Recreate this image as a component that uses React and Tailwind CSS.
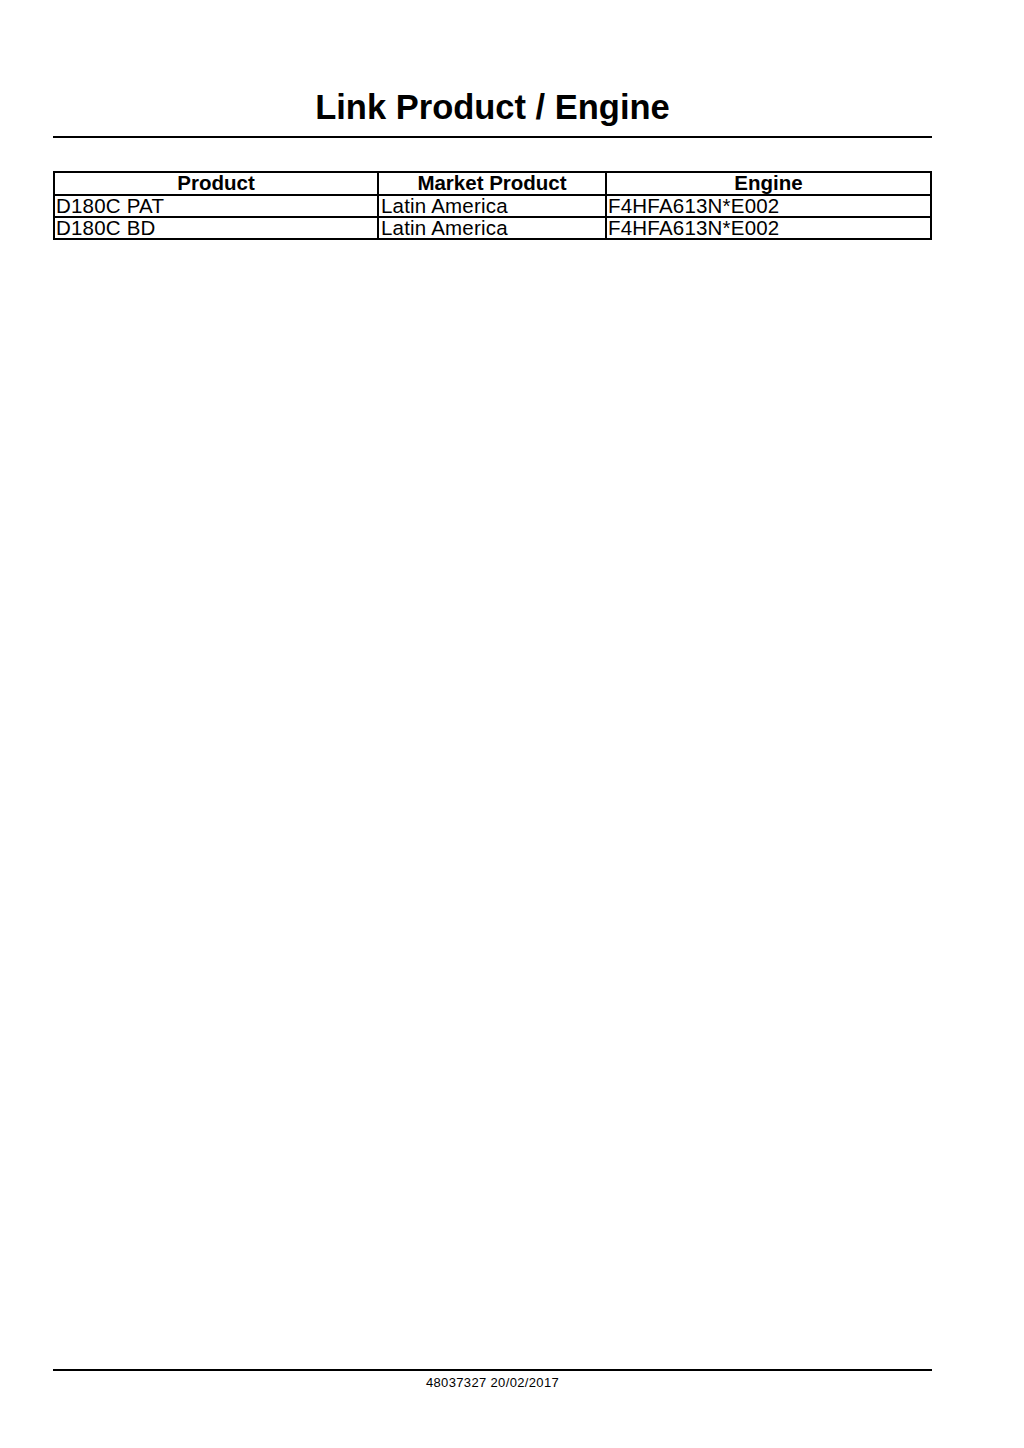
export default function App() {
  const rows = [
    ["D180C PAT", "Latin America", "F4HFA613N*E002"],
    ["D180C BD", "Latin America", "F4HFA613N*E002"],
  ];
  return (
    <div
      className="h-[1448px] w-[1024px] bg-white text-black flex flex-col pb-[59px]"
      style={{ fontFamily: '"Liberation Sans", Arial, sans-serif' }}
    >
      <div className="ml-[53px] w-[879px] flex flex-col">
        <h1 className="pt-[90px] text-center text-[34.5px] leading-[34px] font-bold">
          Link Product / Engine
        </h1>
        <div className="mt-[12px] h-[2px] bg-black" />
        <div className="mt-[33px] border-2 border-black text-[20.5px] leading-[20px]">
          <div className="grid grid-cols-[324px_228px_1fr] border-b-2 border-black h-[23px] font-bold">
            <div className="border-r-2 border-black text-center">Product</div>
            <div className="border-r-2 border-black text-center">Market Product</div>
            <div className="text-center">Engine</div>
          </div>
          {rows.map((r, i) => (
            <div
              key={i}
              className={
                i < rows.length - 1
                  ? "grid grid-cols-[324px_228px_1fr] border-b-2 border-black h-[22px] tracking-[0.2px]"
                  : "grid grid-cols-[324px_228px_1fr] h-[20px] tracking-[0.2px]"
              }
            >
              <div className="border-r-2 border-black pl-[1px]">{r[0]}</div>
              <div className="border-r-2 border-black pl-[2px]">{r[1]}</div>
              <div className="pl-[1px]">{r[2]}</div>
            </div>
          ))}
        </div>
      </div>
      <div className="flex-1" />
      <div className="ml-[53px] w-[879px] flex flex-col">
        <div className="h-[2px] bg-black" />
        <div className="mt-[5px] text-center text-[13px] leading-[13px] tracking-[0.35px]">
          48037327 20/02/2017
        </div>
      </div>
    </div>
  );
}
